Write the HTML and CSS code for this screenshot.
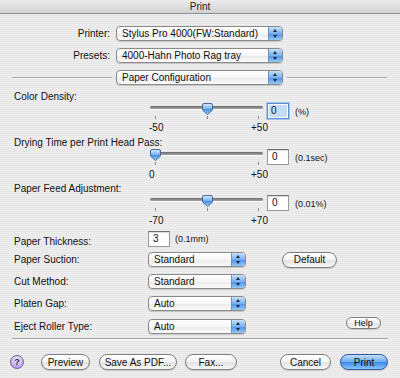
FILE: index.html
```html
<!DOCTYPE html>
<html lang="en">
<head>
    <meta charset="UTF-8">
    <meta name="viewport" content="width=device-width, initial-scale=1.0">
    <title>Print</title>
    <link rel="stylesheet" href="styles.css">
</head>
<body>
    <div class="titlebar">Print</div>

    <div class="header">
        <div class="header-row">
            <span class="header-label">Printer:</span>
            <div class="popup wide"><span class="popup-text">Stylus Pro 4000(FW:Standard)</span><span class="arrows"></span></div>
        </div>
        <div class="header-row">
            <span class="header-label">Presets:</span>
            <div class="popup wide"><span class="popup-text">4000-Hahn Photo Rag tray</span><span class="arrows"></span></div>
        </div>
    </div>

    <div class="pane-row">
        <span class="groove"></span>
        <div class="popup wide"><span class="popup-text">Paper Configuration</span><span class="arrows"></span></div>
        <span class="groove"></span>
    </div>

    <div class="options">
        <!-- Color Density -->
        <div class="opt-label first">Color Density:</div>
        <div class="slider-row">
            <div class="slider">
                <span class="track"></span>
                <span class="tick t-min"></span>
                <span class="tick t-mid"></span>
                <span class="tick t-max"></span>
                <svg class="thumb at-mid" width="11" height="12" viewBox="0 0 11 12">
                    <defs>
                        <linearGradient id="knob" x1="0" y1="0" x2="0" y2="1">
                            <stop offset="0" stop-color="#d8ecff"/>
                            <stop offset="0.45" stop-color="#7db6f2"/>
                            <stop offset="0.55" stop-color="#4c93e6"/>
                            <stop offset="1" stop-color="#9fd0fb"/>
                        </linearGradient>
                    </defs>
                    <path d="M2 0.5 H9 Q10.5 0.5 10.5 2 V7 L5.5 11.5 L0.5 7 V2 Q0.5 0.5 2 0.5 Z" fill="url(#knob)" stroke="#44699a"/>
                </svg>
            </div>
            <div class="field focused"><span class="sel">0</span></div>
            <span class="unit">(%)</span>
        </div>
        <div class="scale"><span>-50</span><span>+50</span></div>

        <!-- Drying Time -->
        <div class="opt-label spaced">Drying Time per Print Head Pass:</div>
        <div class="slider-row">
            <div class="slider">
                <span class="track"></span>
                <span class="tick t-min"></span>
                <span class="tick t-max"></span>
                <svg class="thumb at-min" width="11" height="12" viewBox="0 0 11 12">
                    <path d="M2 0.5 H9 Q10.5 0.5 10.5 2 V7 L5.5 11.5 L0.5 7 V2 Q0.5 0.5 2 0.5 Z" fill="url(#knob)" stroke="#44699a"/>
                </svg>
            </div>
            <div class="field">0</div>
            <span class="unit">(0.1sec)</span>
        </div>
        <div class="scale loose"><span>0</span><span>+50</span></div>

        <!-- Paper Feed -->
        <div class="opt-label">Paper Feed Adjustment:</div>
        <div class="slider-row">
            <div class="slider">
                <span class="track"></span>
                <span class="tick t-min"></span>
                <span class="tick t-mid"></span>
                <span class="tick t-max"></span>
                <svg class="thumb at-mid" width="11" height="12" viewBox="0 0 11 12">
                    <path d="M2 0.5 H9 Q10.5 0.5 10.5 2 V7 L5.5 11.5 L0.5 7 V2 Q0.5 0.5 2 0.5 Z" fill="url(#knob)" stroke="#44699a"/>
                </svg>
            </div>
            <div class="field">0</div>
            <span class="unit">(0.01%)</span>
        </div>
        <div class="scale loose"><span>-70</span><span>+70</span></div>

        <div class="opt-row thickness">
            <span class="opt-name">Paper Thickness:</span>
            <div class="field small">3</div>
            <span class="unit near">(0.1mm)</span>
        </div>

        <div class="opt-row">
            <span class="opt-name">Paper Suction:</span>
            <div class="popup narrow"><span class="popup-text">Standard</span><span class="arrows"></span></div>
            <button class="btn default-btn">Default</button>
        </div>

        <div class="opt-row">
            <span class="opt-name">Cut Method:</span>
            <div class="popup narrow"><span class="popup-text">Standard</span><span class="arrows"></span></div>
        </div>

        <div class="opt-row">
            <span class="opt-name">Platen Gap:</span>
            <div class="popup narrow"><span class="popup-text">Auto</span><span class="arrows"></span></div>
        </div>

        <div class="opt-row last">
            <span class="opt-name">Eject Roller Type:</span>
            <div class="popup narrow"><span class="popup-text">Auto</span><span class="arrows"></span></div>
            <button class="btn help-btn">Help</button>
        </div>
    </div>

    <div class="separator"></div>

    <div class="footer">
        <span class="help-circle">?</span>
        <button class="btn preview">Preview</button>
        <button class="btn pdf">Save As PDF...</button>
        <button class="btn fax">Fax...</button>
        <button class="btn cancel">Cancel</button>
        <button class="btn primary">Print</button>
    </div>
</body>
</html>
```

FILE: styles.css
```css
* {
    margin: 0;
    padding: 0;
    box-sizing: border-box;
    font-family: 'Liberation Sans', Arial, sans-serif;
}

body {
    width: 400px;
    height: 378px;
    overflow: hidden;
    font-size: 10px;
    color: #111;
    background: repeating-linear-gradient(#eeeeee 0, #eeeeee 1px, #e6e6e6 1px, #e6e6e6 2px);
}

.titlebar {
    height: 14px;
    line-height: 13px;
    text-align: center;
    font-size: 10px;
    color: #222;
    background: linear-gradient(#ececec, #d2d2d2);
    border-bottom: 1px solid #8f8f8f;
}

/* printer / presets */
.header {
    padding-top: 12px;
}

.header-row {
    display: flex;
    align-items: center;
    height: 15px;
    margin-bottom: 7px;
}

.header-label {
    width: 110px;
    text-align: right;
    margin-right: 6px;
}

/* popup menus */
.popup {
    display: flex;
    align-items: stretch;
    height: 15px;
    border: 1px solid #8a8a8a;
    border-radius: 4px;
    background: linear-gradient(#ffffff, #f6f6f6 50%, #e9e9e9 51%, #fbfbfb);
    box-shadow: 0 1px 1px rgba(0, 0, 0, 0.15);
    overflow: hidden;
}

.popup.wide {
    width: 167px;
}

.popup.narrow {
    width: 98px;
}

.popup-text {
    flex: 1;
    padding-left: 5px;
    line-height: 13px;
    white-space: nowrap;
}

.arrows {
    position: relative;
    width: 14px;
    border-left: 1px solid #6f8fb6;
    background: linear-gradient(#c7e0fa, #79b0ee 50%, #4d8fe6 51%, #94c9f8);
}

.arrows::before,
.arrows::after {
    content: "";
    position: absolute;
    left: 4px;
    border-left: 2.5px solid transparent;
    border-right: 2.5px solid transparent;
}

.arrows::before {
    top: 2px;
    border-bottom: 3px solid #1c2a3c;
}

.arrows::after {
    bottom: 2px;
    border-top: 3px solid #1c2a3c;
}

/* pane selector row */
.pane-row {
    display: grid;
    grid-template-columns: 1fr 167px 1fr;
    align-items: center;
    column-gap: 4px;
    padding: 0 13px 0 12px;
    margin-top: 1px;
}

.groove {
    height: 2px;
    border-top: 1px solid #a3a3a3;
    border-bottom: 1px solid #f8f8f8;
}

/* options */
.options {
    padding-left: 14px;
}

.opt-label {
    line-height: 12px;
    margin-top: 2px;
}

.opt-label.first {
    margin-top: 6px;
}

.opt-label.spaced {
    margin-top: 3px;
}

.slider-row {
    display: flex;
    align-items: flex-start;
    height: 16px;
    margin-left: 136px;
}

.slider {
    position: relative;
    width: 113px;
    height: 16px;
    margin-right: 4px;
}

.track {
    position: absolute;
    left: 0;
    right: 0;
    top: 3px;
    height: 3px;
    border-radius: 2px;
    background: linear-gradient(#6c6c6c, #a5a5a5);
    box-shadow: 0 1px 0 #fafafa;
}

.tick {
    position: absolute;
    top: 13px;
    width: 1px;
    height: 3px;
    background: #8c8c8c;
}

.t-min { left: 5px; }
.t-mid { left: 57px; }
.t-max { left: 108px; }

.thumb {
    position: absolute;
    top: 0;
}

.thumb.at-mid { left: 52px; }
.thumb.at-min { left: 0; }

.field {
    width: 22px;
    height: 16px;
    padding-left: 4px;
    line-height: 14px;
    background: #fff;
    border: 1px solid #9a9a9a;
    border-top-color: #6e6e6e;
    box-shadow: inset 0 1px 1px rgba(0, 0, 0, 0.15);
}

.field.focused {
    padding: 1px;
    border-color: #5b8fcc;
    box-shadow: 0 0 0 1px #a3c6ef;
}

.field.focused .sel {
    display: block;
    height: 12px;
    line-height: 12px;
    padding-left: 2px;
    background: #c3dbf7;
}

.unit {
    margin-left: 6px;
    margin-top: 4px;
    font-size: 9px;
}

.unit.near {
    margin-left: 5px;
    margin-top: 3px;
}

.scale {
    display: grid;
    grid-template-columns: 102px auto;
    margin-left: 135px;
    margin-top: 3px;
    line-height: 12px;
}

.scale.loose {
    margin-top: 4px;
}

.opt-row {
    display: flex;
    align-items: center;
    height: 15px;
    margin-top: 7px;
}

.opt-row.thickness {
    height: 16px;
    margin-top: 4px;
    align-items: flex-start;
}

.opt-row.thickness .opt-name {
    margin-top: 5px;
}

.opt-row.thickness + .opt-row {
    margin-top: 5px;
}

.opt-row.last {
    margin-top: 8px;
}

.opt-name {
    width: 134px;
}

.field.small {
    line-height: 13px;
}

/* aqua buttons */
.btn {
    height: 16px;
    border: 1px solid #7f7f7f;
    border-radius: 8px;
    font-size: 10px;
    color: #111;
    background: linear-gradient(#ffffff, #f3f3f3 50%, #e2e2e2 51%, #f8f8f8);
    box-shadow: 0 1px 1px rgba(0, 0, 0, 0.15);
    text-align: center;
}

.default-btn {
    width: 55px;
    margin-left: 36px;
}

.help-btn {
    width: 35px;
    height: 12px;
    line-height: 10px;
    font-size: 9px;
    margin-left: 100px;
    align-self: flex-start;
    margin-top: -2px;
}

.separator {
    margin: 4px 12px 0 12px;
    height: 2px;
    border-top: 1px solid #a3a3a3;
    border-bottom: 1px solid #f8f8f8;
}

.footer {
    display: flex;
    align-items: center;
    height: 16px;
    margin-top: 14px;
    padding-left: 10px;
}

.help-circle {
    width: 14px;
    height: 14px;
    border-radius: 50%;
    border: 1px solid #6e5f9e;
    background: radial-gradient(circle at 50% 30%, #f4eeff, #c6b2f0 60%, #9a83d8);
    font-size: 9px;
    font-weight: bold;
    line-height: 12px;
    text-align: center;
    color: #1e1640;
}

.preview { width: 49px; margin-left: 17px; }
.pdf { width: 78px; margin-left: 9px; }
.fax { width: 52px; margin-left: 8px; }
.cancel { width: 51px; margin-left: 43px; }

.primary {
    width: 48px;
    margin-left: 9px;
    border-color: #35589a;
    background: linear-gradient(#c2e0fd, #6aa9f2 50%, #3a86ec 51%, #86c6fc);
}
```
